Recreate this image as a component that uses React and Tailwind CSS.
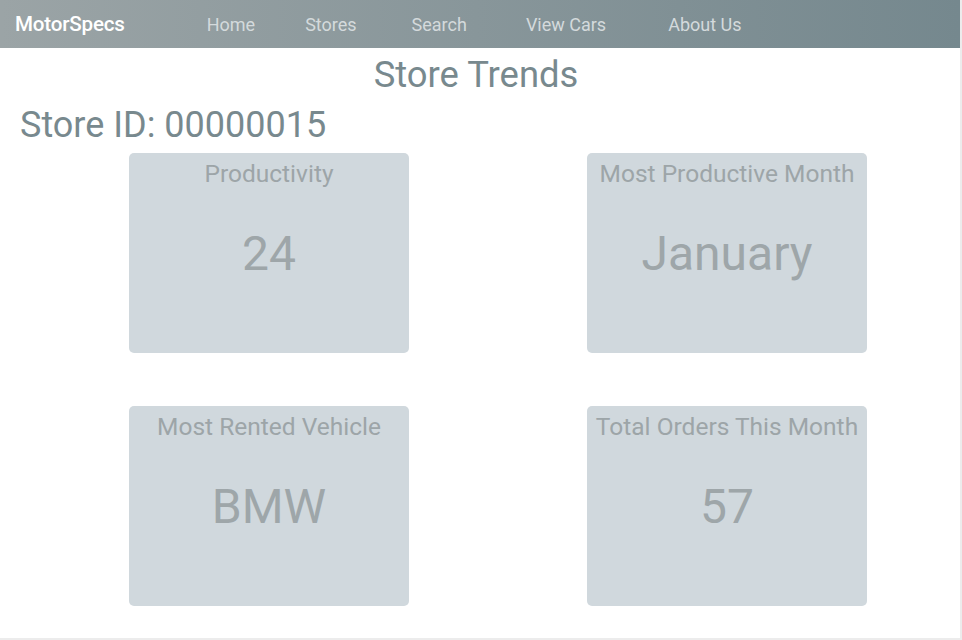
import React from 'react';

const stats = [
  { id: 'prod', title: 'Productivity', value: '24' },
  { id: 'month', title: 'Most Productive Month', value: 'January' },
  { id: 'vehicle', title: 'Most Rented Vehicle', value: 'BMW' },
  { id: 'orders', title: 'Total Orders This Month', value: '57' },
];

const links = [
  { label: 'Home', cls: 'ml-[82px]' },
  { label: 'Stores', cls: 'ml-[50px]' },
  { label: 'Search', cls: 'ml-[55px]' },
  { label: 'View Cars', cls: 'ml-[59px]' },
  { label: 'About Us', cls: 'ml-[62px]' },
];

const App = () => {
  return (
    <div className="h-[640px] bg-white border-r-2 border-b-2 border-[#ececec] font-['Roboto',sans-serif]">
      {/* Navbar */}
      <nav className="h-12 flex items-center pl-[15px] bg-gradient-to-r from-[#9ba4a6] to-[#75888e]">
        <span className="text-white text-[20.6px] font-medium tracking-[-0.2px]">MotorSpecs</span>
        {links.map((l) => (
          <a key={l.label} className={`${l.cls} text-[#d4dadc] text-[18px]`}>
            {l.label}
          </a>
        ))}
      </nav>

      {/* Header */}
      <h1 className="text-center pr-2 text-[36.4px] leading-[52px] mt-[1px] text-[#78898e]">Store Trends</h1>
      <h2 className="pl-5 text-[36px] leading-[48px] text-[#78898e]">Store ID: 00000015</h2>

      {/* Stat cards */}
      <div className="grid grid-cols-[280px_280px] gap-x-[178px] gap-y-[53px] pl-[129px] mt-[4px]">
        {stats.map((s) => (
          <div key={s.id} className="h-[200px] bg-[#d0d8dd] rounded-[5px] flex flex-col items-center pt-[6px]">
            <div className="text-[24.5px] leading-[30px] text-[#9da5a8]">{s.title}</div>
            <div className="mt-[41px] text-[48px] leading-[48px] text-[#9ea6a9]">{s.value}</div>
          </div>
        ))}
      </div>
    </div>
  );
};

export default App;
